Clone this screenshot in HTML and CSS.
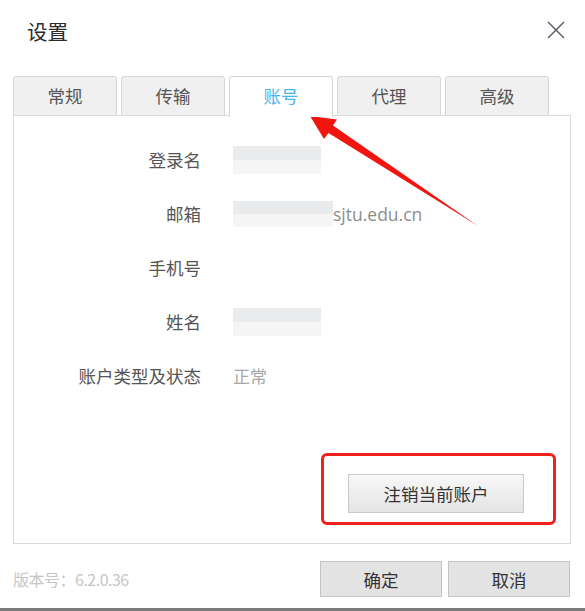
FILE: index.html
```html
<!DOCTYPE html>
<html lang="zh-CN">
<head>
<meta charset="utf-8">
<title>设置</title>
<link rel="stylesheet" href="styles.css">
</head>
<body>
<div class="window">
  <div class="header">
    <div class="title">设置</div>
    <svg class="close" width="18" height="18" viewBox="0 0 18 18"><path d="M1 1 L17 17 M17 1 L1 17" stroke="#5a5f66" stroke-width="1.5" fill="none"/></svg>
  </div>
  <div class="tabs">
    <div class="tab">常规</div>
    <div class="tab">传输</div>
    <div class="tab active">账号</div>
    <div class="tab">代理</div>
    <div class="tab">高级</div>
  </div>
  <div class="panel">
    <div class="rows">
      <div class="row"><div class="label">登录名</div><div class="value"><span class="blur b88"></span></div></div>
      <div class="row"><div class="label">邮箱</div><div class="value"><span class="blur b100 thin"></span><span class="email">sjtu.edu.cn</span></div></div>
      <div class="row"><div class="label">手机号</div><div class="value"></div></div>
      <div class="row"><div class="label">姓名</div><div class="value"><span class="blur b88"></span></div></div>
      <div class="row"><div class="label">账户类型及状态</div><div class="value status">正常</div></div>
    </div>
    <div class="actions"><button class="btn-dereg">注销当前账户</button></div>
  </div>
  <div class="footer">
    <div class="version">版本号：6.2.0.36</div>
    <div class="buttons">
      <button class="btn">确定</button>
      <button class="btn">取消</button>
    </div>
  </div>
  <div class="redbox"></div>
  <svg class="arrow" width="585" height="611" viewBox="0 0 585 611">
    <polygon points="310,116 324,139 328.5,133 478,226 333,125.5 337,119.5" fill="#f2150f"/>
  </svg>
</div>
</body>
</html>
```
FILE: styles.css
```css
* { box-sizing: border-box; }
html, body { margin: 0; padding: 0; background: #fff; }
body {
  font-family: "Noto Sans CJK SC", "Noto Sans", sans-serif;
  color: #333;
}
.window {
  width: 585px;
  height: 611px;
  position: relative;
  display: flex;
  flex-direction: column;
  border-bottom: 3px solid #7b7b7b;
  background: #fff;
}
.header {
  height: 76px;
  display: flex;
  justify-content: space-between;
  align-items: flex-start;
  padding: 17px 20px 0 27px;
}
.title {
  font-size: 20.5px;
  line-height: 28px;
  color: #2b2b2b;
}
.close { margin-top: 4px; }
.tabs {
  display: flex;
  gap: 4px;
  padding-left: 13px;
  height: 40px;
}
.tab {
  width: 104px;
  height: 40px;
  border: 1px solid #d6d6d6;
  border-radius: 3px 3px 0 0;
  background: #f0f0f0;
  font-size: 17.5px;
  line-height: 38px;
  text-align: center;
  color: #555;
}
.tab.active {
  background: #fff;
  color: #4cb5ea;
  position: relative;
  z-index: 1;
  border-bottom-color: #fff;
  height: 41px;
}
.panel {
  margin: -1px 0 0 13px;
  width: 558px;
  height: 429px;
  border: 1px solid #dadada;
  display: flex;
  flex-direction: column;
  padding-top: 17px;
}
.rows { display: flex; flex-direction: column; }
.row {
  height: 54px;
  display: flex;
  align-items: center;
  gap: 32px;
}
.label {
  width: 187px;
  text-align: right;
  font-size: 17.5px;
  color: #555;
  line-height: 24px;
}
.value {
  display: flex;
  align-items: center;
  font-size: 17px;
  color: #999;
  line-height: 24px;
}
.blur {
  display: inline-block;
  height: 28px;
  background:
    linear-gradient(to bottom, rgba(232,233,234,0.9) 0, rgba(232,233,234,0.9) 50%, rgba(244,244,245,0.9) 50%, rgba(244,244,245,0.9) 100%);
}
.blur.b88 { width: 88px; }
.blur.b100 { width: 100px; }
.blur.thin { height: 26px; }
.email { color: #8d8d8d; font-family: "Open Sans", "Noto Sans", sans-serif; font-size: 17.5px; }
.status { color: #a8a8a8; }
.actions {
  margin-top: 71px;
  display: flex;
  justify-content: flex-end;
  padding-right: 46px;
}
.btn-dereg {
  width: 176px;
  height: 39px;
  border: 1px solid #cacaca;
  background: linear-gradient(to bottom, #f8f8f8, #e4e4e4);
  font-family: inherit;
  font-size: 17.5px;
  color: #333;
  padding: 0;
}
.footer {
  display: flex;
  justify-content: space-between;
  align-items: center;
  padding: 17px 15px 0 13px;
}
.version {
  font-size: 16px;
  letter-spacing: -0.5px;
  color: #c6c6c6;
}
.buttons { display: flex; gap: 6px; }
.btn {
  width: 122px;
  height: 36px;
  border: 1px solid #c4c4c4;
  background: #e3e3e3;
  font-family: inherit;
  font-size: 17.5px;
  color: #333;
  padding: 0;
}
.redbox {
  position: absolute;
  left: 321px;
  top: 453px;
  width: 235px;
  height: 72px;
  border: 3px solid #f0201a;
  border-radius: 6px;
}
.arrow {
  position: absolute;
  left: 0;
  top: 0;
  pointer-events: none;
}
```
